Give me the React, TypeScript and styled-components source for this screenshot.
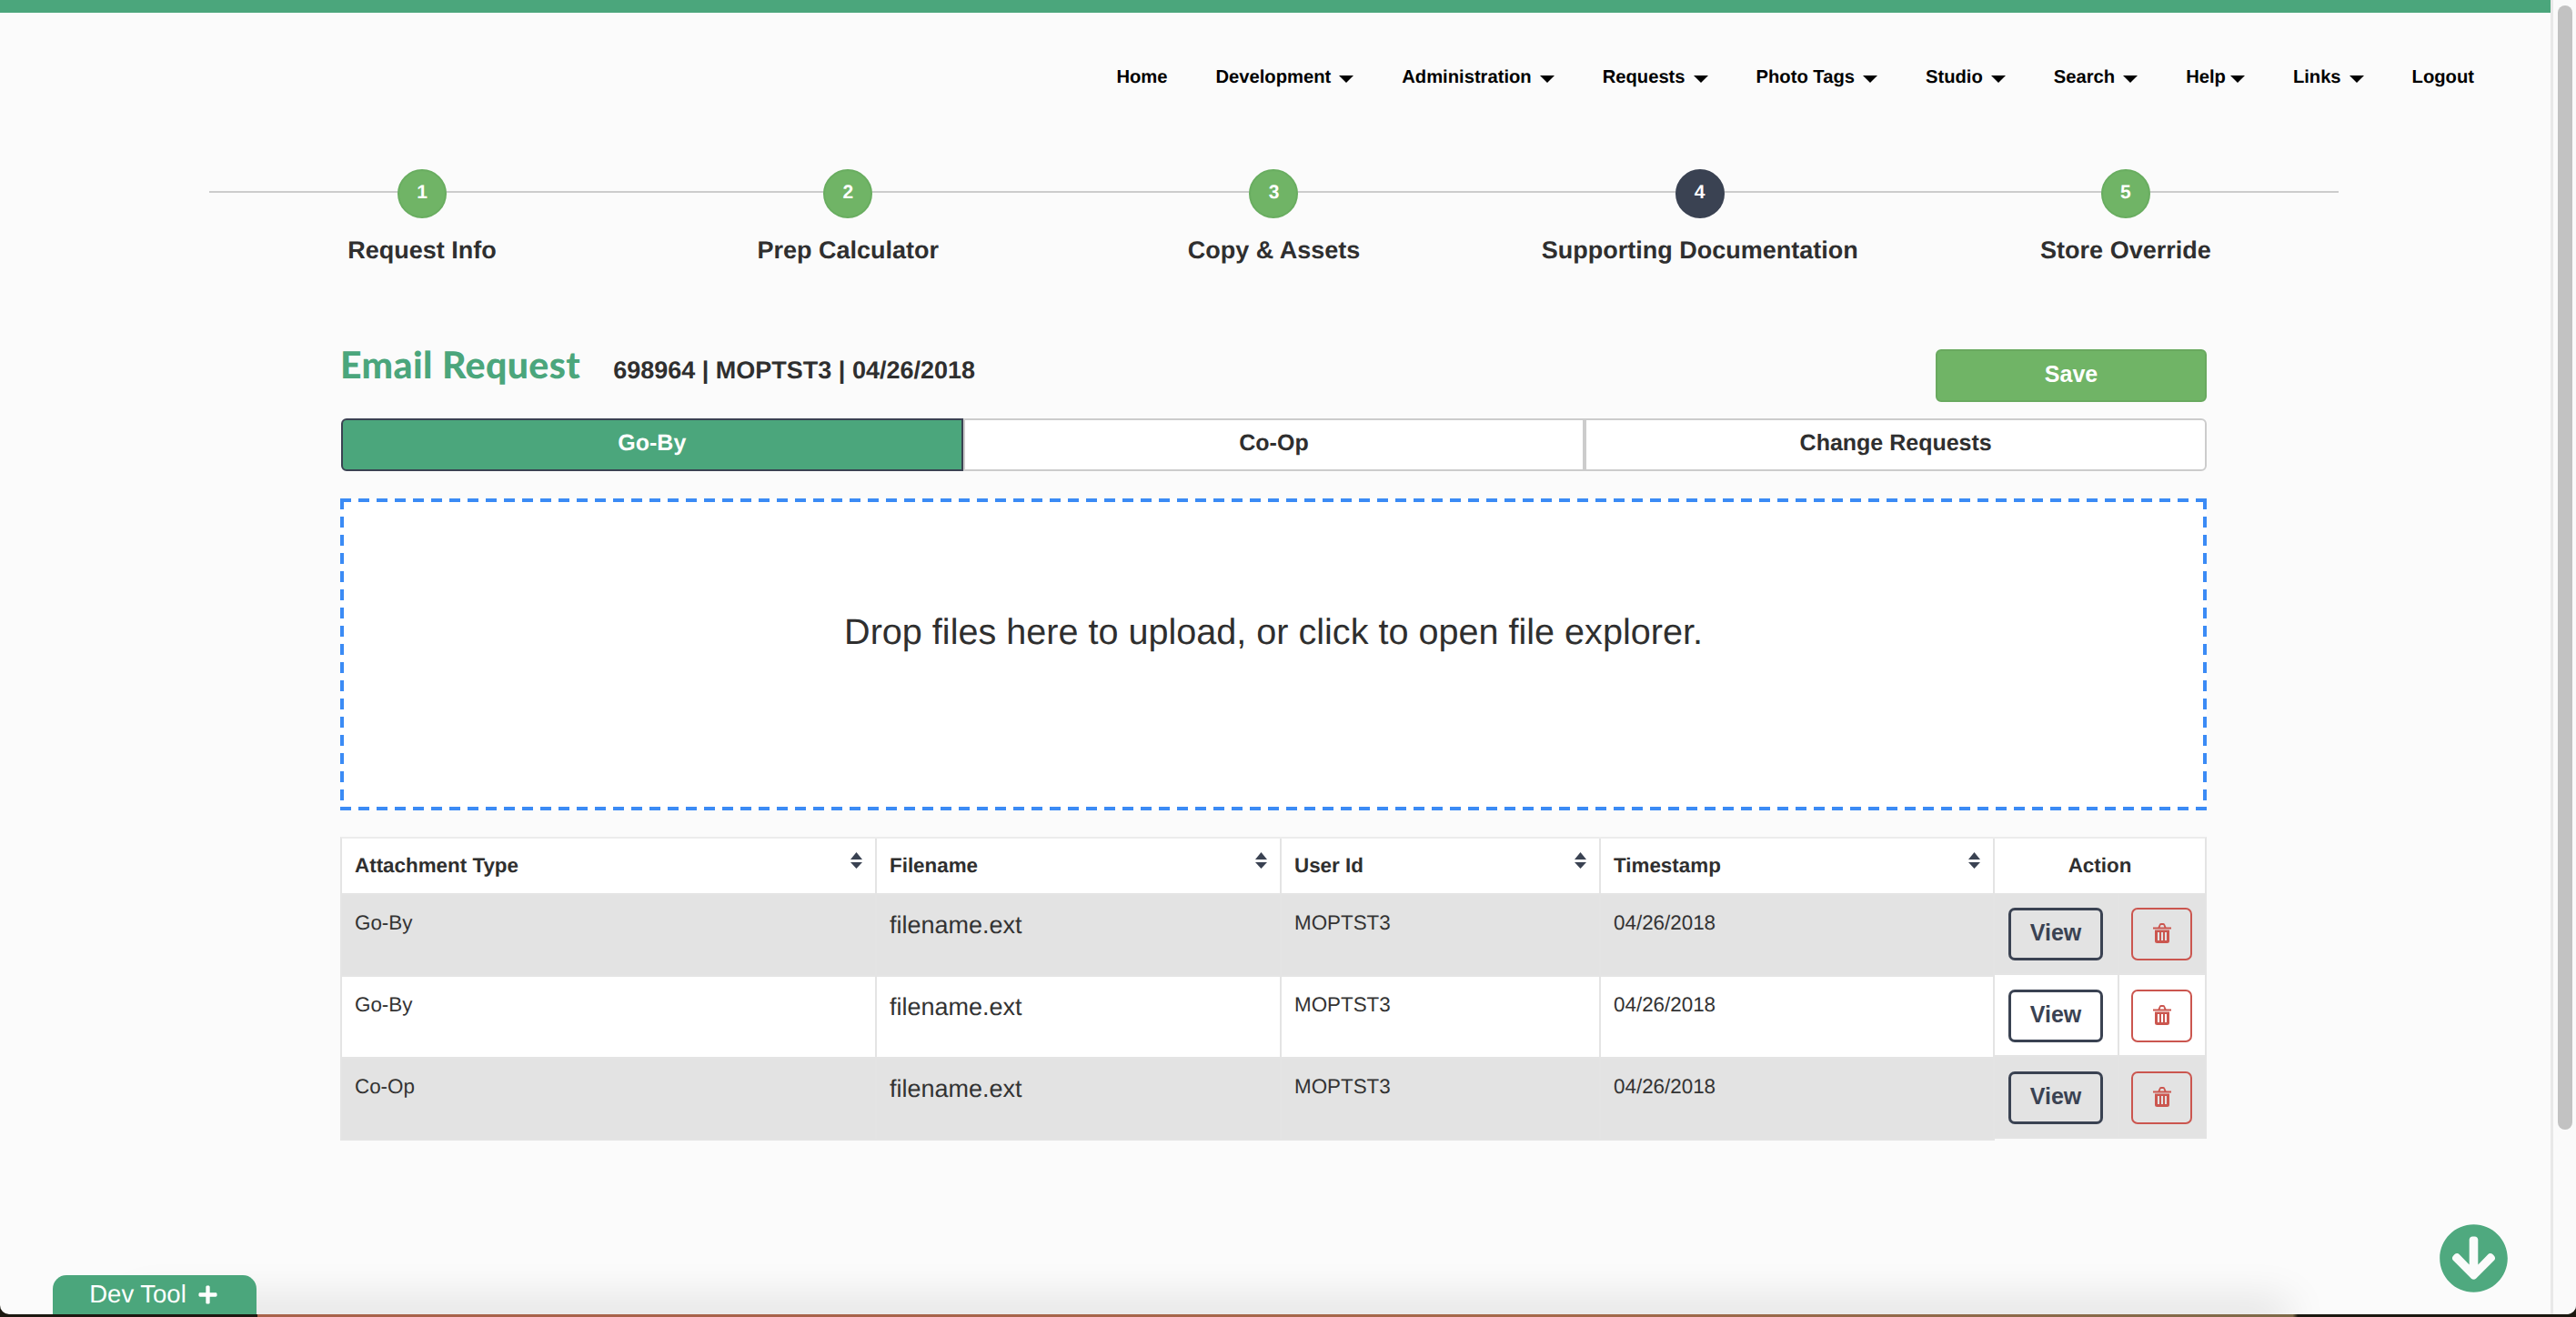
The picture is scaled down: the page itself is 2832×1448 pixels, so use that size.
import React from 'react';
import styled, { createGlobalStyle } from 'styled-components';
import { FaArrowCircleDown, FaPlus } from 'react-icons/fa';

const GREEN = '#4ba67c';
const LIGHT_GREEN = '#70b466';
const SLATE = '#3a4252';
const RED = '#cb564f';
const DIVIDER = '#e4e4e4';

const NAV_ITEMS = [
  { label: 'Home' },
  { label: 'Development', menu: true },
  { label: 'Administration', menu: true },
  { label: 'Requests', menu: true },
  { label: 'Photo Tags', menu: true },
  { label: 'Studio', menu: true },
  { label: 'Search', menu: true },
  { label: 'Help', menu: true, tight: true },
  { label: 'Links', menu: true },
  { label: 'Logout' },
];

const STEPS = ['Request Info', 'Prep Calculator', 'Copy & Assets', 'Supporting Documentation', 'Store Override'];
const CURRENT_STEP = 4;

const ROWS = [
  { type: 'Go-By', file: 'filename.ext', user: 'MOPTST3', date: '04/26/2018' },
  { type: 'Go-By', file: 'filename.ext', user: 'MOPTST3', date: '04/26/2018' },
  { type: 'Co-Op', file: 'filename.ext', user: 'MOPTST3', date: '04/26/2018' },
];

const COLUMNS = [
  { label: 'Attachment Type', width: 588 },
  { label: 'Filename', width: 445 },
  { label: 'User Id', width: 351 },
  { label: 'Timestamp', width: 433 },
];

const SortIcon = () => (
  <SortSvg viewBox="0 0 13 18" width="13" height="18">
    <path d="M6.5 0 13 8H0z" />
    <path d="M0 11h13l-6.5 7z" />
  </SortSvg>
);

const TrashIcon = () => (
  <svg viewBox="0 0 20 22" width="20" height="22" fill="currentColor" fillRule="evenodd">
    <path d="M0 4.5h5.5L7 1.2Q7.5 0 9 0h2q1.500 0 2 1.200l1.500 3.300H20v2H0zM7.600 4.500h4.800L11.400 2H8.600z" />
    <path d="M2 7.500h16v12q0 2.500-2.500 2.500h-11Q2 22 2 19.500zM5 10v9h2v-9zM9 10v9h2v-9zM13 10v9h2v-9z" />
  </svg>
);

const App = () => {
  return (
    <Screen>
      <GlobalStyle />
      <Viewport>
        <Page>
          <TopBar />
          <Nav>
            {NAV_ITEMS.map((item) => (
              <NavItem key={item.label}>
                {item.label}
                {item.menu && <Caret $tight={item.tight} />}
              </NavItem>
            ))}
          </Nav>
          <Stepper>
            {STEPS.map((step, i) => (
              <Step key={step}>
                <StepDot $current={i + 1 === CURRENT_STEP}>{i + 1}</StepDot>
                <StepLabel>{step}</StepLabel>
              </Step>
            ))}
          </Stepper>
          <Content>
            <HeadingRow>
              <Title>Email Request</Title>
              <Meta>698964 | MOPTST3 | 04/26/2018</Meta>
              <SaveButton>Save</SaveButton>
            </HeadingRow>
            <Tabs>
              <Tab $active>Go-By</Tab>
              <Tab>Co-Op</Tab>
              <Tab>Change Requests</Tab>
            </Tabs>
            <DropZone>Drop files here to upload, or click to open file explorer.</DropZone>
            <Tables>
              <MainTable>
                <thead>
                  <tr>
                    {COLUMNS.map((col) => (
                      <HeadCell key={col.label} $width={col.width}>
                        <HeadInner>
                          {col.label}
                          <SortIcon />
                        </HeadInner>
                      </HeadCell>
                    ))}
                  </tr>
                </thead>
                <tbody>
                  {ROWS.map((row, i) => (
                    <BodyRow key={i}>
                      <BodyCell>{row.type}</BodyCell>
                      <FileCell>{row.file}</FileCell>
                      <BodyCell>{row.user}</BodyCell>
                      <BodyCell>{row.date}</BodyCell>
                    </BodyRow>
                  ))}
                </tbody>
              </MainTable>
              <ActionTable>
                <colgroup>
                  <col width="137" />
                  <col width="94" />
                </colgroup>
                <thead>
                  <tr>
                    <ActionHead colSpan={2}>Action</ActionHead>
                  </tr>
                </thead>
                <tbody>
                  {ROWS.map((_, i) => (
                    <BodyRow key={i}>
                      <ViewCell>
                        <ViewButton>View</ViewButton>
                      </ViewCell>
                      <TrashCell>
                        <TrashButton aria-label="Delete">
                          <TrashIcon />
                        </TrashButton>
                      </TrashCell>
                    </BodyRow>
                  ))}
                </tbody>
              </ActionTable>
            </Tables>
          </Content>
        </Page>
        <ScrollTrack>
          <ScrollThumb />
        </ScrollTrack>
        <BottomShadow />
        <DevTool>
          Dev Tool
          <FaPlus size={23} />
        </DevTool>
        <ScrollDown>
          <FaArrowCircleDown size={77} />
        </ScrollDown>
      </Viewport>
      <DesktopEdge />
    </Screen>
  );
};

const GlobalStyle = createGlobalStyle`
  * {
    box-sizing: border-box;
  }
  body {
    margin: 0;
    font-family: "Liberation Sans", Arial, sans-serif;
    color: #2f2f2f;
    text-rendering: geometricPrecision;
  }
`;

const Screen = styled.div`
  width: 2832px;
  height: 1448px;
  display: flex;
  flex-direction: column;
  overflow: hidden;
  background: #1b1810;
`;
const Viewport = styled.div`
  position: relative;
  flex: 1;
  min-height: 0;
  display: flex;
  overflow: hidden;
  background: #fbfbfb;
  border-radius: 0 0 10px 10px;
`;
const DesktopEdge = styled.div`
  height: 3px;
  background: linear-gradient(
    90deg,
    #1b1810 0 10%,
    #a8624a 10% 30%,
    #a5694a 60%,
    #7d6a48 89%,
    #1b1810 89.2%
  );
`;
const Page = styled.div`
  width: 2804px;
  display: flex;
  flex-direction: column;
`;
const TopBar = styled.div`
  height: 14px;
  background: ${GREEN};
`;
const Nav = styled.nav`
  height: 142px;
  display: flex;
  align-items: center;
  justify-content: flex-end;
  gap: 53px;
  padding-right: 84px;
`;
const NavItem = styled.a`
  display: flex;
  align-items: center;
  font-size: 20.2px;
  font-weight: 700;
  color: #000;
`;
const Caret = styled.span<{ $tight?: boolean }>`
  margin-left: ${(p) => (p.$tight ? 5 : 9)}px;
  margin-top: 3px;
  border-top: 8px solid #000;
  border-left: 8px solid transparent;
  border-right: 8px solid transparent;
`;
const Stepper = styled.div`
  position: relative;
  width: 2341px;
  margin: 30px 0 0 230px;
  display: grid;
  grid-template-columns: repeat(5, 1fr);

  &::before {
    content: '';
    position: absolute;
    top: 24px;
    left: 0;
    right: 0;
    height: 2px;
    background: #ccc;
  }
`;
const Step = styled.div`
  position: relative;
  display: flex;
  flex-direction: column;
  align-items: center;
`;
const StepDot = styled.div<{ $current?: boolean }>`
  width: 54px;
  height: 54px;
  display: flex;
  align-items: center;
  justify-content: center;
  padding-bottom: 2px;
  border-radius: 50%;
  border: 2px solid ${(p) => (p.$current ? SLATE : '#69ad60')};
  background: ${(p) => (p.$current ? SLATE : LIGHT_GREEN)};
  color: #fff;
  font-size: 21px;
  font-weight: 700;
`;
const StepLabel = styled.div`
  margin-top: 20px;
  font-size: 27px;
  line-height: 30px;
  font-weight: 700;
  white-space: nowrap;
`;
const Content = styled.div`
  width: 2052px;
  margin: 94px 0 0 374px;
`;
const HeadingRow = styled.div`
  display: flex;
  align-items: flex-start;
  height: 58px;
`;
const Title = styled.h1`
  margin: -5px 36px 0 0;
  font-family: Lato, "Liberation Sans", sans-serif;
  font-size: 41px;
  line-height: 44px;
  font-weight: 900;
  letter-spacing: 0.4px;
  color: ${GREEN};
`;
const Meta = styled.div`
  margin-top: 1px;
  font-size: 27px;
  line-height: 44px;
  font-weight: 700;
`;
const SaveButton = styled.button`
  margin-left: auto;
  width: 298px;
  height: 58px;
  padding: 0 0 3px;
  border: 2px solid #69a95f;
  border-radius: 6px;
  background: ${LIGHT_GREEN};
  color: #fff;
  font: 700 25px "Liberation Sans", Arial, sans-serif;
`;
const Tabs = styled.div`
  display: grid;
  grid-template-columns: repeat(3, 1fr);
  height: 58px;
  margin: 18px 0 30px;
  padding-left: 1px;
`;
const Tab = styled.div<{ $active?: boolean }>`
  display: flex;
  align-items: center;
  justify-content: center;
  padding-bottom: 3px;
  border: 2px solid ${(p) => (p.$active ? SLATE : '#ccc')};
  background: ${(p) => (p.$active ? GREEN : '#fff')};
  color: ${(p) => (p.$active ? '#fff' : '#2f2f2f')};
  font-size: 25px;
  font-weight: 700;

  &:first-child {
    border-radius: 6px 0 0 6px;
  }
  &:last-child {
    border-radius: 0 6px 6px 0;
  }
`;
const DropZone = styled.div`
  height: 343px;
  display: flex;
  align-items: center;
  justify-content: center;
  padding-bottom: 49px;
  font-size: 39.6px;
  background-color: #fff;
  background-image:
    linear-gradient(90deg, #3b8bf5 12px, transparent 0),
    linear-gradient(90deg, #3b8bf5 12px, transparent 0),
    linear-gradient(#3b8bf5 12px, transparent 0),
    linear-gradient(#3b8bf5 12px, transparent 0);
  background-size: 20px 4px, 20px 4px, 4px 20px, 4px 20px;
  background-position: 0 0, 0 100%, 0 0, 100% 0;
  background-repeat: repeat-x, repeat-x, repeat-y, repeat-y;
`;
const Tables = styled.div`
  display: flex;
  align-items: flex-start;
  margin-top: 29px;
`;
const MainTable = styled.table`
  width: 1819px;
  flex: none;
  table-layout: fixed;
  border-collapse: separate;
  border-spacing: 0;
  border-top: 2px solid #ececec;
  border-left: 2px solid ${DIVIDER};
`;
const ActionTable = styled.table`
  width: 233px;
  flex: none;
  table-layout: fixed;
  border-collapse: separate;
  border-spacing: 0;
  border-top: 2px solid #ececec;
  border-right: 2px solid ${DIVIDER};
`;
const HeadCell = styled.th<{ $width: number }>`
  width: ${(p) => p.$width}px;
  height: 62px;
  padding: 0 14px;
  background: #fff;
  border-right: 2px solid ${DIVIDER};
  border-bottom: 2px solid ${DIVIDER};
  font-size: 22.4px;
  font-weight: 700;
  text-align: left;
`;
const HeadInner = styled.div`
  display: flex;
  align-items: center;
  justify-content: space-between;
  height: 100%;
`;
const SortSvg = styled.svg`
  fill: ${SLATE};
  margin-bottom: 12px;
`;
const BodyRow = styled.tr`
  &:nth-child(odd) td {
    background: #e3e3e3;
  }
  &:nth-child(even) td {
    background: #fff;
  }
`;
const BodyCell = styled.td`
  height: 90px;
  padding: 18px 14px 0;
  vertical-align: top;
  border-right: 2px solid ${DIVIDER};
  border-bottom: 2px solid ${DIVIDER};
  font-size: 22.4px;
  line-height: 26px;
  color: #333;
`;
const FileCell = styled(BodyCell)`
  padding-top: 17px;
  font-size: 27px;
  line-height: 32px;
`;
const ActionHead = styled.th`
  height: 60px;
  padding: 0;
  background: #fff;
  font-size: 22.4px;
  font-weight: 700;
`;
const ViewCell = styled.td`
  height: 90px;
  padding: 16px 0 0 15px;
  vertical-align: top;
  border-right: 2px solid ${DIVIDER};
  border-bottom: 2px solid ${DIVIDER};
`;
const TrashCell = styled.td`
  height: 90px;
  padding: 16px 0 0 13px;
  vertical-align: top;
  border-bottom: 2px solid ${DIVIDER};
`;
const ViewButton = styled.button`
  display: block;
  width: 104px;
  height: 58px;
  padding: 0 0 3px;
  border: 3px solid ${SLATE};
  border-radius: 7px;
  background: transparent;
  color: ${SLATE};
  font: 700 25px "Liberation Sans", Arial, sans-serif;
`;
const TrashButton = styled.button`
  display: flex;
  align-items: center;
  justify-content: center;
  width: 67px;
  height: 58px;
  padding: 0 0 3px;
  border: 2.5px solid ${RED};
  border-radius: 7px;
  background: transparent;
  color: ${RED};
`;
const ScrollTrack = styled.div`
  width: 28px;
  padding: 6px 4px 0 5px;
  background: #fafafa;
  border-left: 3px solid #e8e8e8;
`;
const ScrollThumb = styled.div`
  width: 16px;
  height: 1236px;
  border-radius: 8px;
  background: #c2c2c2;
`;
const BottomShadow = styled.div`
  position: absolute;
  left: 160px;
  right: 330px;
  bottom: -2px;
  height: 2px;
  box-shadow: 0 0 46px 14px rgba(0, 0, 0, 0.13);
`;
const DevTool = styled.div`
  position: absolute;
  left: 58px;
  bottom: 0;
  width: 224px;
  height: 43px;
  display: flex;
  align-items: center;
  justify-content: center;
  gap: 12px;
  padding: 0 2px 1px 0;
  border-radius: 15px 15px 0 0;
  background: ${GREEN};
  color: #fff;
  font-size: 27.5px;
`;
const ScrollDown = styled.div`
  position: absolute;
  left: 2681px;
  top: 1345px;
  display: flex;
  color: #4fa97f;
`;

export default App;
